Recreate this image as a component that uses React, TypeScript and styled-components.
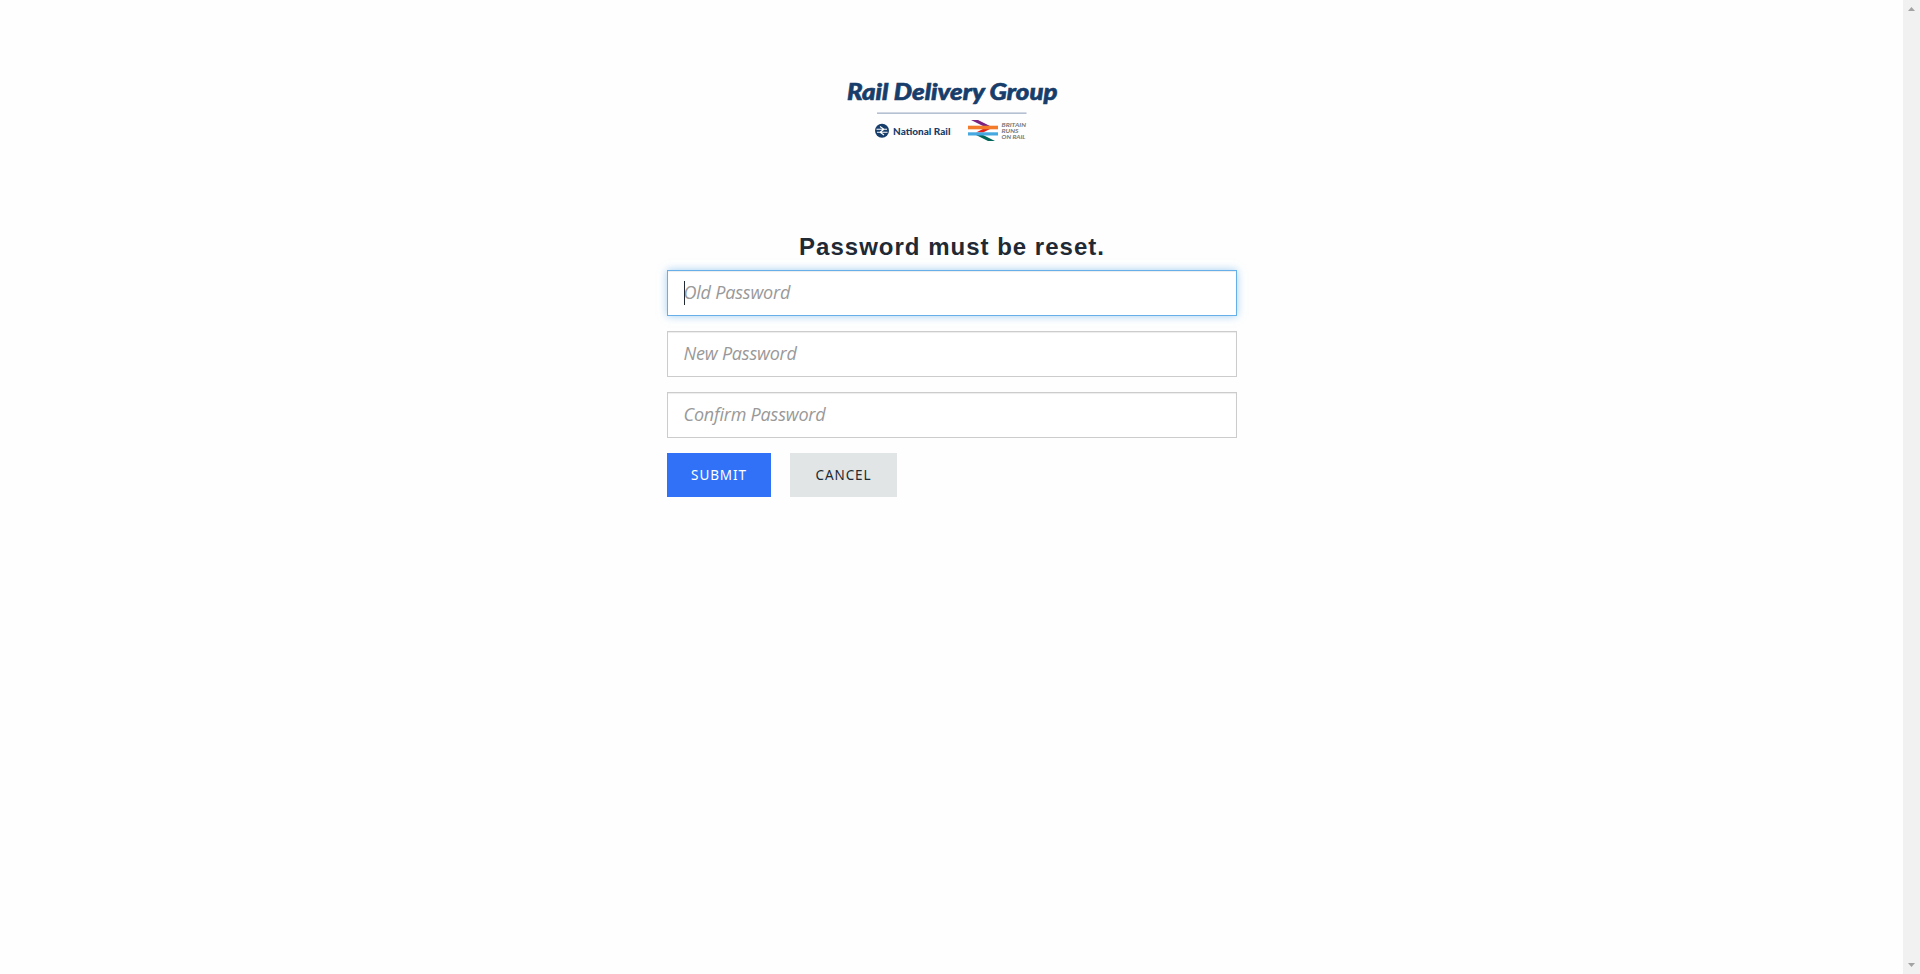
import React from 'react';
import styled, { createGlobalStyle } from 'styled-components';

const GlobalStyle = createGlobalStyle`
  *, *::before, *::after { box-sizing: border-box; }
  body { margin: 0; background: #fefefe; overflow: hidden; }
`;

const Page = styled.div`
  display: flex;
  height: 974px;
  font-family: 'Segoe UI', 'Noto Sans', sans-serif;
`;

const Main = styled.main`
  flex: 1;
  display: flex;
  flex-direction: column;
  align-items: center;
  padding-top: 70px;
`;

const Logo = styled.svg`
  display: block;
  width: 240px;
  height: 80px;
  margin-right: 3px;
`;

const Form = styled.form`
  width: 570px;
  margin: 70px 0 0 1px;
  display: flex;
  flex-direction: column;
`;

const Title = styled.h1`
  margin: 0 0 6px;
  padding-top: 12px;
  height: 44px;
  line-height: 30px;
  text-align: center;
  font-family: 'Liberation Sans', Arial, sans-serif;
  font-size: 24px;
  font-weight: 700;
  letter-spacing: 1px;
  color: #212934;
`;

const Field = styled.label`
  position: relative;
  display: block;
  margin-bottom: 15px;
`;

const Input = styled.input<{ $active?: boolean }>`
  display: block;
  width: 570px;
  height: 46px;
  padding: 0 16px 2px 15.5px;
  border: 1px solid ${(p) => (p.$active ? '#66afe9' : '#ccc')};
  border-radius: 0;
  outline: none;
  background: #fff;
  box-shadow: inset 0 1px 1px rgba(0, 0, 0, 0.075)
    ${(p) => (p.$active ? ', 0 0 8px rgba(102, 175, 233, 0.6)' : '')};
  font: italic 400 18px 'Segoe UI', 'Open Sans', 'Noto Sans', sans-serif;
  letter-spacing: -0.2px;
  &::placeholder { color: #999; opacity: 1; }
`;

const Caret = styled.span`
  position: absolute;
  left: 17px;
  top: 11px;
  width: 1px;
  height: 24px;
  background: #212934;
`;

const Actions = styled.div`
  display: flex;
  gap: 19px;
`;

const Button = styled.button<{ $primary?: boolean }>`
  width: ${(p) => (p.$primary ? 104 : 107)}px;
  height: 44px;
  padding: 0 0 1px;
  border: 0;
  background: ${(p) => (p.$primary ? '#3071f7' : '#e1e5e5')};
  color: ${(p) => (p.$primary ? '#fff' : '#212934')};
  font: 13.5px 'Segoe UI', 'Noto Sans', sans-serif;
  letter-spacing: 0.9px;
`;

const Scrollbar = styled.div`
  width: 17px;
  display: flex;
  flex-direction: column;
  justify-content: space-between;
  align-items: center;
  padding: 7px 0;
  background: #f1f1f1;
`;

const Arrow = styled.svg`
  display: block;
  width: 7px;
  height: 4px;
  fill: #a3a3a3;
`;

const BrandLogo = () => (
  <Logo viewBox="830 70 240 80">
    <text x="847" y="100.400" textLength="210.500" lengthAdjust="spacingAndGlyphs" fill="#173d6b" stroke="#173d6b" strokeWidth="0.600" fontFamily="Lato, sans-serif" fontSize="22.500" fontWeight="900" fontStyle="italic">Rail Delivery Group</text>
    <rect x="877" y="112.5" width="149.500" height="1.300" fill="#a3b1c8" />
    <circle cx="882" cy="130.700" r="7" fill="#173d6b" />
    <path d="M876.500 129.200h10.500M877 132.300h10.500M880 126.500l4 2.700-4 3.100 4 2.700" fill="none" stroke="#fff" strokeWidth="1.100" />
    <text x="893" y="134.600" textLength="57.500" lengthAdjust="spacing" fill="#173d6b" fontFamily="Lato, sans-serif" fontSize="10" fontWeight="900">National Rail</text>
    <path d="M971 120h7l12 6h-7z" fill="#7d2181" />
    <path d="M983 129h7l-7 3.500h-7z" fill="#e32119" />
    <path d="M976 135h7l12 6h-7z" fill="#00675a" />
    <path d="M968 125.700h30v3.600h-30z" fill="#f47b29" />
    <path d="M968 132.300h30v3.200h-30z" fill="#45a8e0" />
    <g fill="#777" fontFamily="Lato, sans-serif" fontSize="5.800" fontWeight="700" fontStyle="italic">
      <text x="1001.500" y="126.600" textLength="24.500" lengthAdjust="spacingAndGlyphs">BRITAIN</text>
      <text x="1001.500" y="132.600" textLength="17" lengthAdjust="spacingAndGlyphs">RUNS</text>
      <text x="1001.500" y="138.600" textLength="24" lengthAdjust="spacingAndGlyphs">ON RAIL</text>
    </g>
  </Logo>
);

export default function App() {
  return (
    <>
      <GlobalStyle />
      <Page>
        <Main>
          <BrandLogo />
          <Form>
            <Title>Password must be reset.</Title>
            <Field>
              <Input $active type="password" placeholder="Old Password" />
              <Caret />
            </Field>
            <Field>
              <Input type="password" placeholder="New Password" />
            </Field>
            <Field>
              <Input type="password" placeholder="Confirm Password" />
            </Field>
            <Actions>
              <Button $primary type="button">SUBMIT</Button>
              <Button type="button">CANCEL</Button>
            </Actions>
          </Form>
        </Main>
        <Scrollbar>
          <Arrow viewBox="0 0 7 4"><path d="M3.500 0L7 4H0z" /></Arrow>
          <Arrow viewBox="0 0 7 4"><path d="M0 0h7L3.500 4z" /></Arrow>
        </Scrollbar>
      </Page>
    </>
  );
}
